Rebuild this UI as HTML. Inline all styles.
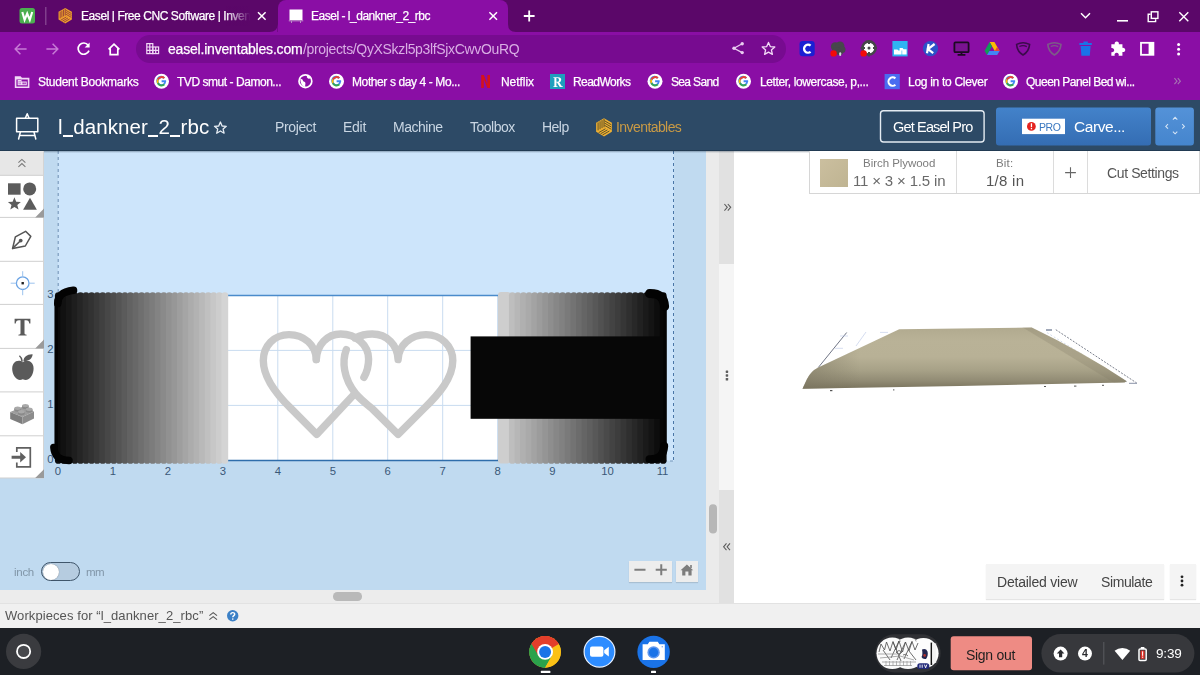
<!DOCTYPE html>
<html>
<head>
<meta charset="utf-8">
<title>Easel - l_dankner_2_rbc</title>
<style>
*{box-sizing:border-box;margin:0;padding:0}
html,body{width:1200px;height:675px;overflow:hidden;background:#fff;font-family:"Liberation Sans",sans-serif;}
.abs{position:absolute}
#root{position:relative;width:1200px;height:675px;overflow:hidden}
.t{position:absolute;white-space:nowrap;line-height:1;will-change:transform}
/* chrome */
#tabbar{left:0;top:0;width:1200px;height:32px;background:#5b0769}
#toolbar{left:0;top:32px;width:1200px;height:68px;background:#8a0ea5}
#acttab{left:277.500px;top:0px;width:230.500px;height:32px;background:#8a0ea5;border-radius:8px 8px 0 0}
#url{left:136px;top:35px;width:650px;height:28px;border-radius:14px;background:#770b90}
.wt{color:#fff;-webkit-text-stroke:0.250px #fff}
.mn{top:119.700px;font-size:14px;color:#c9d6e3}
.bm{top:75.500px;font-size:12px}
/* app */
#apphdr{left:0;top:100px;width:1200px;height:51px;background:#2d4a66}
#canvasbg{left:44px;top:151px;width:662px;height:439px;background:#c0daf0}
#canvasin{left:58px;top:151px;width:615.500px;height:310px;background:#cde5fb}
#ltool{left:0;top:151px;width:44px;height:327px;background:#fff}
#belowtool{left:0;top:478px;width:44px;height:112px;background:#c0daf0}
#vscroll{left:706px;top:151px;width:13px;height:439px;background:#ebebeb}
#divider{left:719px;top:151px;width:15px;height:452px;background:#f5f5f5}
#divtop{left:719px;top:151px;width:15px;height:113px;background:#e1e1e1}
#hscroll{left:0;top:590px;width:719px;height:13px;background:#ececec}
#wpbar{left:0;top:603px;width:1200px;height:25px;background:#f0f0f0}
#shelf{left:0;top:628px;width:1200px;height:47px;background:#1d2025}
</style>
</head>
<body>
<div id="root">
<!-- browser chrome -->
<div class="abs" id="tabbar"></div>
<div class="abs" id="toolbar"></div>
<div class="abs" id="acttab"></div>
<div class="abs" id="url"></div>

<!-- tab strip content -->
<svg class="abs" style="left:0;top:0" width="1200" height="100" viewBox="0 0 1200 100">
  <defs>
    <linearGradient id="fade" x1="0" x2="1"><stop offset="0" stop-color="#5b0769" stop-opacity="0"/><stop offset="1" stop-color="#5b0769"/></linearGradient>
    <g id="gicon">
      <circle r="7.5" fill="#fff"/>
      <path d="M4.6,-0.9 H0.1 V1.1 H2.7 C2.4,2.4 1.3,3.1 0.1,3.1 A3.1,3.1 0 1 1 2.1,-2.4 L3.5,-3.8 A5,5 0 1 0 4.7,0.2 Z" fill="#4285f4"/>
      <path d="M-4.4,-2.3 A5,5 0 0 1 3.5,-3.8 L2.1,-2.4 A3.1,3.1 0 0 0 -2.8,-1.2 Z" fill="#ea4335"/>
      <path d="M-4.4,-2.3 L-2.8,-1.2 A3.1,3.1 0 0 0 -2.8,1.3 L-4.4,2.5 A5,5 0 0 1 -4.4,-2.3 Z" fill="#fbbc05"/>
      <path d="M-4.4,2.5 L-2.8,1.3 A3.1,3.1 0 0 0 2.1,2.6 L3.6,3.8 A5,5 0 0 1 -4.4,2.5 Z" fill="#34a853"/>
    </g>
  </defs>
  <!-- active tab curves -->
  <path d="M269.500,32 Q277.500,32 277.500,24 V32 Z" fill="#8a0ea5"/>
  <path d="M516,32 Q508,32 508,24 V32 Z" fill="#8a0ea5"/>
  <!-- W icon -->
  <rect x="19.5" y="8" width="15.5" height="15.5" rx="2.5" fill="#4caf50"/>
  <path d="M22.3,12 L24.6,19.8 L27.2,13.5 L29.8,19.8 L32.2,12" fill="none" stroke="#fff" stroke-width="2.1" stroke-linejoin="miter"/>
  <rect x="45.2" y="7" width="1.2" height="18" fill="#8a4d96"/>
  <!-- easel cube icon -->
  <g transform="translate(65.2,15.7)"><path d="M0,-7.70 L6.67,-3.85 V3.85 L0,7.70 L-6.67,3.85 V-3.85 Z" fill="#f0a12e"/><path d="M-1.67,-5.94 V0.66 M0.50,-5.48 L6.07,-2.23 M-4.50,4.51 L1.17,1.26 M-3.33,-4.98 V1.62 M0.50,-3.55 L6.07,-0.30 M-2.83,5.48 L2.83,2.23 M-5.00,-4.01 V2.59 M0.50,-1.62 L6.07,1.63 M-1.17,6.44 L4.50,3.19 M0,-6.90 V0 " stroke="#7a2438" stroke-width="0.85" fill="none" opacity="0.8"/></g>
  <rect x="222" y="6" width="30" height="20" fill="url(#fade)"/>
  <!-- close x tab1 -->
  <path d="M258,12.2 L265.6,19.8 M265.6,12.2 L258,19.8" stroke="#fff" stroke-width="1.5"/>
  <!-- active tab icon -->
  <rect x="289.5" y="9.5" width="13" height="10.5" fill="#fff"/>
  <rect x="288.8" y="20.3" width="14.4" height="1" fill="#c9a4d2"/>
  <path d="M291.5,21 V23 M300.5,21 V23" stroke="#b88fc4" stroke-width="1"/>
  <path d="M489.4,12.2 L497,19.8 M497,12.2 L489.4,19.8" stroke="#fff" stroke-width="1.5"/>
  <path d="M529.2,10.6 V21.4 M523.8,16 H534.6" stroke="#fff" stroke-width="1.8"/>
  <!-- window controls -->
  <path d="M1081,13.3 L1085.5,17.8 L1090,13.3" fill="none" stroke="#fff" stroke-width="1.5"/>
  <rect x="1117" y="20" width="11" height="1.6" fill="#fff"/>
  <path d="M1150.6,14.2 H1148.2 V21.6 H1155.6 V19.2" fill="none" stroke="#fff" stroke-width="1.4"/>
  <rect x="1151.3" y="11.8" width="6.6" height="6.6" fill="none" stroke="#fff" stroke-width="1.4"/>
  <path d="M1179.3,12.2 L1188.3,21.2 M1188.3,12.2 L1179.3,21.2" stroke="#fff" stroke-width="1.4"/>
  <!-- nav icons -->
  <path d="M26.6,49 H15.4 M20.4,43.8 L15.2,49 L20.4,54.2" fill="none" stroke="#c77bd6" stroke-width="1.5"/>
  <path d="M46.4,49 H57.6 M52.6,43.8 L57.8,49 L52.6,54.2" fill="none" stroke="#c77bd6" stroke-width="1.5"/>
  <path d="M88.2,45.2 A5.6,5.6 0 1 0 89,50.6" fill="none" stroke="#fff" stroke-width="1.7"/>
  <path d="M89.6,42.6 V47.6 H84.6 Z" fill="#fff"/>
  <path d="M108.6,49.4 L114,44.2 L119.4,49.4 M110.2,48.6 V54.6 H117.8 V48.6" fill="none" stroke="#fff" stroke-width="1.7" stroke-linejoin="miter"/>
  <!-- site info icon -->
  <g fill="none" stroke="#f1d9f6" stroke-width="1.2">
    <rect x="146.8" y="43.6" width="6" height="10"/>
    <rect x="152.8" y="47" width="5.8" height="6.6"/>
    <path d="M146.8,47 H152.8 M146.8,50.3 H158.6 M149.8,43.6 V53.6 M155.7,47 V53.6"/>
  </g>
  <!-- share -->
  <g fill="#e9cdf0" stroke="#e9cdf0">
    <circle cx="742.2" cy="43.8" r="1.7" stroke="none"/><circle cx="742.2" cy="52.6" r="1.7" stroke="none"/><circle cx="734" cy="48.2" r="1.7" stroke="none"/>
    <path d="M742.2,43.8 L734,48.2 L742.2,52.6" fill="none" stroke-width="1.3"/>
  </g>
  <!-- star -->
  <path d="M768.5,42.4 L770.3,46.6 L774.8,47 L771.4,50 L772.4,54.4 L768.5,52.1 L764.6,54.4 L765.6,50 L762.2,47 L766.7,46.6 Z" fill="none" stroke="#f1d9f6" stroke-width="1.3" stroke-linejoin="round"/>
  <!-- ext: C -->
  <rect x="799.5" y="41" width="15.2" height="15.2" rx="3.2" fill="#1b1fd3"/>
  <path d="M810.6,45.6 A4,4 0 1 0 810.6,51.8" fill="none" stroke="#fff" stroke-width="2.3"/>
  <!-- ext: cloud -->
  <g fill="#47474b"><circle cx="835.200" cy="46.600" r="4.300"/><circle cx="840" cy="45.800" r="4.400"/><circle cx="842" cy="49.600" r="3.500"/><circle cx="836.400" cy="50.600" r="3.700"/><circle cx="839.800" cy="52" r="3.200"/><path d="M838.500,53 L840.600,56.600 L842,52 Z"/></g>
  <circle cx="833.600" cy="53.400" r="3.200" fill="#f40a0a"/>
  <rect x="839.200" y="52.200" width="2" height="3.800" rx="1" fill="#d8d8e0"/>
  <!-- ext: target -->
  <circle cx="869" cy="48" r="6.6" fill="#fff" stroke="#46464a" stroke-width="2.6"/>
  <path d="M869,40 V44 M869,52 V56.4 M860.6,48 H865 M873,48 H877" stroke="#46464a" stroke-width="2"/>
  <circle cx="869" cy="48" r="1.5" fill="#46464a"/>
  <circle cx="863.6" cy="53.4" r="3.2" fill="#f40a0a"/>
  <!-- ext: blue folder -->
  <rect x="892.4" y="41" width="15.2" height="15.4" fill="#2fb4f2"/>
  <path d="M894,49.4 h3.4 l1,1.200 h3.200 v4 h-7.600 Z M899.600,48 h3 l1,1.200 h3 v5.400 h-4.400 v-4.200 h-2.600 Z" fill="#fff"/>
  <!-- ext: K -->
  <circle cx="930.5" cy="48.6" r="7.6" fill="#2c52c8"/>
  <path d="M928.6,44 L927,53.2 M934.6,44 L928,49 L933.2,53.2" fill="none" stroke="#fff" stroke-width="2.2"/>
  <!-- ext: monitor -->
  <rect x="954.4" y="42.4" width="14.2" height="9.8" rx="1" fill="#7a1391" stroke="#1c0a22" stroke-width="1.8"/>
  <path d="M957.6,54.800 H965.4 M961.5,52.600 V54.800" stroke="#1c0a22" stroke-width="1.800"/>
  <!-- ext: drive -->
  <path d="M989.600,42 L994.400,42 L999.600,51 L994.800,51 Z" fill="#fbbc04"/>
  <path d="M989.600,42 L992,46.200 L987,55 L984.600,50.800 Z" fill="#0f9d58"/>
  <path d="M989.400,51 L999.600,51 L997.200,55 L987,55 Z" fill="#4285f4"/>
  <path d="M994.800,51 L999.600,51 L997.200,46.800 Z" fill="#ea4335"/>
  <!-- ext: shields -->
  <path d="M1016.600,44.400 Q1023,41 1029.600,44.400 Q1029,51.800 1023,55 Q1017,51.800 1016.600,44.400 Z" fill="none" stroke="#3b0b4b" stroke-width="1.600"/>
  <path d="M1019.400,46.600 Q1023,44.600 1026.800,46.600" fill="none" stroke="#3b0b4b" stroke-width="1.200"/>
  <path d="M1047.800,44.400 Q1054.400,41 1061,44.400 Q1060.400,51.800 1054.400,55 Q1048.400,51.800 1047.800,44.400 Z" fill="none" stroke="#7d5b88" stroke-width="1.600"/>
  <path d="M1050.800,46.600 Q1054.400,44.600 1058.200,46.600" fill="none" stroke="#7d5b88" stroke-width="1.200"/>
  <!-- ext: trash -->
  <path d="M1079.400,43 H1091.800 V45 H1079.400 Z M1083.400,41.600 H1087.800 V43 H1083.400 Z M1080.600,46 H1090.600 L1089.800,55.800 H1081.400 Z" fill="#1a73e8"/>
  <!-- puzzle -->
  <g transform="translate(1117,49) scale(1.130) translate(-1117,-49.600)"><path d="M1112,45.400 h3 a1.900,1.900 0 1 1 3.600,0 h3.200 v3.200 a1.900,1.900 0 1 1 0,3.600 v3.400 h-3.400 a1.900,1.900 0 1 0 -3.400,0 h-3 v-3.200 a1.900,1.900 0 1 0 0,-3.600 Z" fill="#fff"/></g>
  <!-- side panel -->
  <rect x="1141" y="42.800" width="12.400" height="12" fill="none" stroke="#fff" stroke-width="1.800"/>
  <rect x="1148.600" y="42.800" width="4.800" height="12" fill="#fff"/>
  <circle cx="1178.600" cy="44.400" r="1.500" fill="#fff"/><circle cx="1178.600" cy="49.200" r="1.500" fill="#fff"/><circle cx="1178.600" cy="54" r="1.500" fill="#fff"/>
  <!-- bookmarks icons -->
  <path d="M15.600,77 h4.600 l1.400,1.600 h7 v8.600 h-13 Z" fill="none" stroke="#f1d9f6" stroke-width="1.600"/><path d="M15.600,77 h4.600 l1.400,1.600 v0.800 h-6 Z" fill="#f1d9f6"/>
  <path d="M18.200,80.600 h2.800 v4.200 h-2.800 Z M22,82 h4.200 v2.800 h-4.200 Z" fill="none" stroke="#f1d9f6" stroke-width="1.100"/><path d="M19.600,80.600 v4.200 M18.200,82.700 h2.800 M24.100,82 v2.800" stroke="#f1d9f6" stroke-width="0.700"/>
  <use href="#gicon" x="161.500" y="81.200"/>
  <circle cx="305.400" cy="81.200" r="6.400" fill="none" stroke="#fff" stroke-width="1.700"/>
  <path d="M300.200,78.600 q3,0.600 3,2.600 q2.600,0.600 2.200,2.800 q-0.600,1.600 0.200,3.200 q-5,0 -5.400,-8.600 Z M307,75.400 q-0.800,2 1,3.200 q2.200,0.400 2.800,-1.200 q-1.400,-2 -3.800,-2 Z" fill="#fff"/>
  <use href="#gicon" x="336.500" y="81.200"/>
  <path d="M481.200,75 h2.600 l3.600,9 v-9 h2.600 v13 h-2.600 l-3.600,-9 v9 h-2.600 Z" fill="#d4121a"/>
  <rect x="550" y="74" width="15" height="15" fill="#1f9fbd"/>
  <path d="M553.400,77.200 h4.800 q3,0 3,2.600 q0,2 -2,2.500 l2.600,3.900 h1 v0.800 h-3 l-2.800,-4.400 h-0.600 v3.600 h1.200 v0.800 h-4.200 v-0.800 h1 v-8.200 h-1 Z M556.400,78 v3.800 h1 q1.600,0 1.600,-1.900 q0,-1.900 -1.600,-1.900 Z" fill="#fff"/>
  <use href="#gicon" x="655" y="81.200"/>
  <use href="#gicon" x="743.500" y="81.200"/>
  <rect x="884.600" y="74" width="15.200" height="15.200" fill="#4a6cf0"/>
  <path d="M895.400,78.400 A4.200,4.200 0 1 0 895.400,84.800" fill="none" stroke="#fff" stroke-width="2.100"/>
  <use href="#gicon" x="1010.500" y="81.200"/>
  <path d="M1174.400,78.200 L1177,81.200 L1174.400,84.200 M1177.800,78.200 L1180.400,81.200 L1177.800,84.200" fill="none" stroke="#a673b3" stroke-width="1.100"/>
</svg>
<!-- chrome text -->
<div class="t wt" style="left:80.500px;top:9.500px;font-size:12px;width:172px;overflow:hidden;letter-spacing:-0.428px">Easel | Free CNC Software | Inventables</div>
<div class="t wt" style="left:311px;top:9.500px;font-size:12px;letter-spacing:-0.482px">Easel - l_dankner_2_rbc</div>
<div class="t wt" style="left:168px;top:41.500px;font-size:14px;letter-spacing:-0.192px">easel.inventables.com</div>
<div class="t" style="left:302.500px;top:41.500px;font-size:14px;color:#d9aee4;letter-spacing:-0.343px">/projects/QyXSkzl5p3lfSjxCwvOuRQ</div>
<div class="t wt bm" style="left:37.500px;letter-spacing:-0.248px">Student Bookmarks</div>
<div class="t wt bm" style="left:177px;letter-spacing:-0.457px">TVD smut - Damon...</div>
<div class="t wt bm" style="left:352px;letter-spacing:-0.396px">Mother s day 4 - Mo...</div>
<div class="t wt bm" style="left:501px;letter-spacing:-0.049px">Netflix</div>
<div class="t wt bm" style="left:573px;letter-spacing:-0.552px">ReadWorks</div>
<div class="t wt bm" style="left:670.500px;letter-spacing:-0.652px">Sea Sand</div>
<div class="t wt bm" style="left:759.500px;letter-spacing:-0.371px">Letter, lowercase, p,...</div>
<div class="t wt bm" style="left:907.600px;letter-spacing:-0.290px">Log in to Clever</div>
<div class="t wt bm" style="left:1026.400px;letter-spacing:-0.515px">Queen Panel Bed wi...</div>

<!-- app -->
<div class="abs" id="apphdr"></div>
<div class="abs" id="canvasbg"></div>
<div class="abs" id="canvasin"></div>

<!-- canvas -->
<svg class="abs" style="left:44px;top:151px" width="662" height="439" viewBox="44 151 662 439">
  <defs>
    <linearGradient id="gl" x1="0" x2="1"><stop offset="0" stop-color="#050505"/><stop offset="0.050" stop-color="#161616"/><stop offset="1" stop-color="#d4d4d4"/></linearGradient>
    <linearGradient id="gr" x1="0" x2="1"><stop offset="0" stop-color="#d2d2d2"/><stop offset="0.070" stop-color="#c6c6c6"/><stop offset="0.072" stop-color="#bcbcbc"/><stop offset="0.920" stop-color="#141414"/><stop offset="1" stop-color="#050505"/></linearGradient>
  </defs>
  <!-- dashed bounds -->
  <path d="M58.200,151 V292" stroke="#6d8fb3" stroke-width="1" stroke-dasharray="3 3"/>
  <path d="M673.500,151 V461" stroke="#4a76a6" stroke-width="1" stroke-dasharray="3 3"/>
  <path d="M664,461 H673.500" stroke="#6d8fb3" stroke-width="0.900" stroke-dasharray="3 3"/>
  <!-- workpiece -->
  <rect x="58.0" y="295.4" width="604.5" height="164.9" fill="#fff"/>
  <path d="M113.0,295.4 V460.3" stroke="#c9dcf0" stroke-width="1"/>
<path d="M167.9,295.4 V460.3" stroke="#c9dcf0" stroke-width="1"/>
<path d="M222.9,295.4 V460.3" stroke="#c9dcf0" stroke-width="1"/>
<path d="M277.8,295.4 V460.3" stroke="#c9dcf0" stroke-width="1"/>
<path d="M332.8,295.4 V460.3" stroke="#c9dcf0" stroke-width="1"/>
<path d="M387.7,295.4 V460.3" stroke="#c9dcf0" stroke-width="1"/>
<path d="M442.7,295.4 V460.3" stroke="#c9dcf0" stroke-width="1"/>
<path d="M497.6,295.4 V460.3" stroke="#c9dcf0" stroke-width="1"/>
<path d="M552.5,295.4 V460.3" stroke="#c9dcf0" stroke-width="1"/>
<path d="M607.5,295.4 V460.3" stroke="#c9dcf0" stroke-width="1"/>
<path d="M58.0,405.4 H662.5" stroke="#c9dcf0" stroke-width="1"/>
<path d="M58.0,350.4 H662.5" stroke="#c9dcf0" stroke-width="1"/>

  <path d="M58.0,295.4 H662.5" stroke="#4a8bcb" stroke-width="1.500"/>
  <path d="M58.0,460.6 H662.5" stroke="#2f6dab" stroke-width="1.500"/>
  <!-- hearts -->
  <g fill="none" stroke="#c9c9c9" stroke-width="7.400" stroke-linecap="round" stroke-linejoin="round">
    <path d="M316.300,359.600 C316,345 304,334.600 289,334.600 C274,334.600 263.300,346 263.300,360.500 C263.300,378 276,394 291,408.500 L316.700,434.400 L353.500,395"/>
    <path d="M316.300,359.600 C317,345 327,334 340.700,334 C356,334 368.600,345 368.600,359 C368.600,366 367,372 363.900,377.400"/>
    <path d="M346.300,349.600 C342,361 343,378 356,394 C362,401 368,405 372,408.500 L398.100,434.400 L424,408.500 C439,394 452.800,378 452.800,360.500 C452.800,346 441,334.600 426,334.600 C411,334.600 398.400,345 398.100,359.600 C397.600,345 387,334 372.200,334 C366,334 360,335.500 355,338"/>
  </g>
  <!-- left gradient block -->
  <rect x="55" y="296" width="172.600" height="164" fill="url(#gl)"/>
<g stroke-linecap="round" fill="none">
<path d="M58.3,295.6 V460.4" stroke="#0a0a0a" stroke-width="6.8"/>
<path d="M63.8,295.6 V460.4" stroke="#111111" stroke-width="6.8"/>
<path d="M69.4,295.6 V460.4" stroke="#171717" stroke-width="6.8"/>
<path d="M74.9,295.6 V460.4" stroke="#1e1e1e" stroke-width="6.8"/>
<path d="M80.5,295.6 V460.4" stroke="#252525" stroke-width="6.8"/>
<path d="M86.0,295.6 V460.4" stroke="#2c2c2c" stroke-width="6.8"/>
<path d="M91.6,295.6 V460.4" stroke="#323232" stroke-width="6.8"/>
<path d="M97.1,295.6 V460.4" stroke="#393939" stroke-width="6.8"/>
<path d="M102.7,295.6 V460.4" stroke="#404040" stroke-width="6.8"/>
<path d="M108.2,295.6 V460.4" stroke="#474747" stroke-width="6.8"/>
<path d="M113.8,295.6 V460.4" stroke="#4d4d4d" stroke-width="6.8"/>
<path d="M119.3,295.6 V460.4" stroke="#545454" stroke-width="6.8"/>
<path d="M124.9,295.6 V460.4" stroke="#5b5b5b" stroke-width="6.8"/>
<path d="M130.4,295.6 V460.4" stroke="#626262" stroke-width="6.8"/>
<path d="M136.0,295.6 V460.4" stroke="#686868" stroke-width="6.8"/>
<path d="M141.6,295.6 V460.4" stroke="#6f6f6f" stroke-width="6.8"/>
<path d="M147.1,295.6 V460.4" stroke="#767676" stroke-width="6.8"/>
<path d="M152.7,295.6 V460.4" stroke="#7c7c7c" stroke-width="6.8"/>
<path d="M158.2,295.6 V460.4" stroke="#838383" stroke-width="6.8"/>
<path d="M163.8,295.6 V460.4" stroke="#8a8a8a" stroke-width="6.8"/>
<path d="M169.3,295.6 V460.4" stroke="#919191" stroke-width="6.8"/>
<path d="M174.9,295.6 V460.4" stroke="#979797" stroke-width="6.8"/>
<path d="M180.4,295.6 V460.4" stroke="#9e9e9e" stroke-width="6.8"/>
<path d="M186.0,295.6 V460.4" stroke="#a5a5a5" stroke-width="6.8"/>
<path d="M191.5,295.6 V460.4" stroke="#acacac" stroke-width="6.8"/>
<path d="M197.1,295.6 V460.4" stroke="#b2b2b2" stroke-width="6.8"/>
<path d="M202.6,295.6 V460.4" stroke="#b9b9b9" stroke-width="6.8"/>
<path d="M208.2,295.6 V460.4" stroke="#c0c0c0" stroke-width="6.8"/>
<path d="M213.7,295.6 V460.4" stroke="#c7c7c7" stroke-width="6.8"/>
<path d="M219.3,295.6 V460.4" stroke="#cdcdcd" stroke-width="6.8"/>
<path d="M224.8,295.6 V460.4" stroke="#d4d4d4" stroke-width="6.8"/>
</g>
  <!-- right gradient block -->
  <rect x="498" y="296" width="168" height="164" fill="url(#gr)"/>
<g stroke-linecap="round" fill="none">
<rect x="498" y="292" width="12.500" height="171.400" rx="3" fill="#cecece" stroke="none"/>
<path d="M512.3,295.6 V460.4" stroke="#bebebe" stroke-width="6.8"/>
<path d="M517.9,295.6 V460.4" stroke="#b7b7b7" stroke-width="6.8"/>
<path d="M523.5,295.6 V460.4" stroke="#b0b0b0" stroke-width="6.8"/>
<path d="M529.1,295.6 V460.4" stroke="#aaaaaa" stroke-width="6.8"/>
<path d="M534.7,295.6 V460.4" stroke="#a3a3a3" stroke-width="6.8"/>
<path d="M540.2,295.6 V460.4" stroke="#9c9c9c" stroke-width="6.8"/>
<path d="M545.8,295.6 V460.4" stroke="#959595" stroke-width="6.8"/>
<path d="M551.4,295.6 V460.4" stroke="#8e8e8e" stroke-width="6.8"/>
<path d="M557.0,295.6 V460.4" stroke="#878787" stroke-width="6.8"/>
<path d="M562.6,295.6 V460.4" stroke="#818181" stroke-width="6.8"/>
<path d="M568.2,295.6 V460.4" stroke="#7a7a7a" stroke-width="6.8"/>
<path d="M573.8,295.6 V460.4" stroke="#737373" stroke-width="6.8"/>
<path d="M579.4,295.6 V460.4" stroke="#6c6c6c" stroke-width="6.8"/>
<path d="M585.0,295.6 V460.4" stroke="#656565" stroke-width="6.8"/>
<path d="M590.5,295.6 V460.4" stroke="#5f5f5f" stroke-width="6.8"/>
<path d="M596.1,295.6 V460.4" stroke="#585858" stroke-width="6.8"/>
<path d="M601.7,295.6 V460.4" stroke="#515151" stroke-width="6.8"/>
<path d="M607.3,295.6 V460.4" stroke="#4a4a4a" stroke-width="6.8"/>
<path d="M612.9,295.6 V460.4" stroke="#434343" stroke-width="6.8"/>
<path d="M618.5,295.6 V460.4" stroke="#3d3d3d" stroke-width="6.8"/>
<path d="M624.1,295.6 V460.4" stroke="#363636" stroke-width="6.8"/>
<path d="M629.7,295.6 V460.4" stroke="#2f2f2f" stroke-width="6.8"/>
<path d="M635.3,295.6 V460.4" stroke="#282828" stroke-width="6.8"/>
<path d="M640.8,295.6 V460.4" stroke="#212121" stroke-width="6.8"/>
<path d="M646.4,295.6 V460.4" stroke="#1a1a1a" stroke-width="6.8"/>
<path d="M652.0,295.6 V460.4" stroke="#141414" stroke-width="6.8"/>
<path d="M657.6,295.6 V460.4" stroke="#0d0d0d" stroke-width="6.8"/>
<path d="M663.2,295.6 V460.4" stroke="#060606" stroke-width="6.8"/>
</g>
  <!-- black rect -->
  <rect x="470.600" y="336.400" width="195" height="82.400" fill="#070707"/>
  <!-- corner blobs -->
  <g fill="none" stroke="#030303" stroke-linecap="round" stroke-linejoin="round">
    <path d="M57.800,303.500 C58,296 61.500,292 73.500,290.300" stroke-width="7.600"/>
    <path d="M56.200,300 V448" stroke-width="3.400"/>
    <path d="M53.800,447.500 C54.500,455.500 58,459.600 69,460.500" stroke-width="7.400"/>
    <path d="M649.500,293.600 C659,293.400 664,297 664.600,306.500" stroke-width="9"/>
    <path d="M665,300 V450" stroke-width="3"/>
    <path d="M649.500,459.200 C659,459.600 663.600,455 664.200,446" stroke-width="8"/>
  </g>
  <g font-family="Liberation Sans, sans-serif" font-size="11.300px" fill="#3a5878"><text x="58.0" y="474.600" text-anchor="middle">0</text><text x="113.0" y="474.600" text-anchor="middle">1</text><text x="167.9" y="474.600" text-anchor="middle">2</text><text x="222.9" y="474.600" text-anchor="middle">3</text><text x="277.8" y="474.600" text-anchor="middle">4</text><text x="332.8" y="474.600" text-anchor="middle">5</text><text x="387.7" y="474.600" text-anchor="middle">6</text><text x="442.7" y="474.600" text-anchor="middle">7</text><text x="497.6" y="474.600" text-anchor="middle">8</text><text x="552.5" y="474.600" text-anchor="middle">9</text><text x="607.5" y="474.600" text-anchor="middle">10</text><text x="662.5" y="474.600" text-anchor="middle">11</text><text x="50.300" y="463.3" text-anchor="middle">0</text><text x="50.300" y="408.4" text-anchor="middle">1</text><text x="50.300" y="353.4" text-anchor="middle">2</text><text x="50.300" y="298.4" text-anchor="middle">3</text></g>
</svg>
<div class="abs" id="ltool"></div>
<div class="abs" id="belowtool"></div>
<div class="abs" id="vscroll"></div>
<div class="abs" id="divider"></div>
<div class="abs" id="divtop"></div>
<div class="abs" id="hscroll"></div>
<div class="abs" id="wpbar"></div>
<div class="abs" id="shelf"></div>

<!-- fade for tab1 title -->
<div class="abs" style="left:226px;top:6px;width:27px;height:20px;background:linear-gradient(90deg,rgba(91,7,105,0),#5b0769 90%)"></div>
<!-- app header content -->
<div class="abs" style="left:0;top:150px;width:1200px;height:3px;background:linear-gradient(180deg,rgba(20,40,60,.55),rgba(20,40,60,0))"></div>
<svg class="abs" style="left:0;top:100px" width="1200" height="51" viewBox="0 100 1200 51">
  <!-- easel logo -->
  <g fill="none" stroke="#fff" stroke-width="1.5" stroke-linejoin="round" stroke-linecap="round">
    <rect x="16.600" y="118.200" width="21.200" height="13.600"/>
    <path d="M25.400,118 L27.200,113.800 L29,118"/>
    <path d="M20.400,132 L18.600,139 M34,132 L35.800,139 M19.400,135.600 H35"/>
  </g>
  <!-- star -->
  <path d="M220.400,122 L222.100,126 L226.300,126.300 L223.100,129.100 L224.100,133.200 L220.400,131 L216.700,133.200 L217.700,129.100 L214.500,126.300 L218.700,126 Z" fill="none" stroke="#e6edf4" stroke-width="1.300" stroke-linejoin="round"/>
  <!-- inventables icon -->
  <g transform="translate(604,127.3)"><path d="M0,-9.10 L7.88,-4.55 V4.55 L0,9.10 L-7.88,4.55 V-4.55 Z" fill="#eeb033"/><path d="M-1.97,-7.16 V0.84 M0.50,-6.52 L7.28,-2.57 M-5.41,5.39 L1.47,1.44 M-3.94,-6.02 V1.97 M0.50,-4.25 L7.28,-0.30 M-3.44,6.52 L3.44,2.57 M-5.91,-4.89 V3.11 M0.50,-1.98 L7.28,1.97 M-1.47,7.66 L5.41,3.71 M0,-8.30 V0 " stroke="#3d3a22" stroke-width="0.95" fill="none" opacity="0.85"/></g>
  <!-- get easel pro -->
  <rect x="880.500" y="110.800" width="103.600" height="31.200" rx="3" fill="none" stroke="#e4ebf2" stroke-width="1.400"/>
  <!-- carve -->
  <defs>
    <linearGradient id="cv" x1="0" y1="0" x2="0" y2="1"><stop offset="0" stop-color="#4382ca"/><stop offset="1" stop-color="#346db3"/></linearGradient>
    <linearGradient id="cv2" x1="0" y1="0" x2="0" y2="1"><stop offset="0" stop-color="#5492d8"/><stop offset="1" stop-color="#4585cd"/></linearGradient>
  </defs>
  <rect x="996" y="107.400" width="155" height="38.200" rx="3" fill="url(#cv)"/>
  <rect x="1155.300" y="107.400" width="38.600" height="38.200" rx="3" fill="url(#cv2)"/>
  <rect x="1022" y="118.700" width="43" height="15.400" fill="#fff"/>
  <circle cx="1031.400" cy="126.400" r="4.400" fill="#e5231f"/>
  <rect x="1030.800" y="123.300" width="1.300" height="3.800" fill="#fff"/><rect x="1030.800" y="127.900" width="1.300" height="1.400" fill="#fff"/>
  <g fill="none" stroke="#d3e3f5" stroke-width="1.100">
    <path d="M1172.900,119.600 L1175.100,117.400 L1177.300,119.600"/>
    <path d="M1172.900,131.600 L1175.100,133.800 L1177.300,131.600"/>
    <path d="M1168,124.200 L1165.800,126.400 L1168,128.600"/>
    <path d="M1182.200,124.200 L1184.400,126.400 L1182.200,128.600"/>
  </g>
</svg>
<div class="t" style="left:57.700px;top:117.300px;font-size:20.500px;color:#fff;letter-spacing:0.080px">l<span style="display:inline-block;width:10px;height:1.500px;background:#fff;vertical-align:-2.600px;margin:0 0.300px"></span>dankner<span style="display:inline-block;width:10px;height:1.500px;background:#fff;vertical-align:-2.600px;margin:0 0.300px"></span>2<span style="display:inline-block;width:10px;height:1.500px;background:#fff;vertical-align:-2.600px;margin:0 0.300px"></span>rbc</div>
<div class="t mn" style="left:274.700px;letter-spacing:-0.368px">Project</div>
<div class="t mn" style="left:343.200px;letter-spacing:-0.256px">Edit</div>
<div class="t mn" style="left:393.100px;letter-spacing:-0.489px">Machine</div>
<div class="t mn" style="left:470.100px;letter-spacing:-0.495px">Toolbox</div>
<div class="t mn" style="left:542.400px;letter-spacing:-0.524px">Help</div>
<div class="t mn" style="left:616.300px;color:#c99a45;letter-spacing:-0.574px">Inventables</div>
<div class="t" style="left:892.600px;top:119.600px;font-size:14.500px;color:#fff;letter-spacing:-0.836px">Get Easel Pro</div>
<div class="t" style="left:1039px;top:121.800px;font-size:10.500px;color:#3a78c0;letter-spacing:-0.389px">PRO</div>
<div class="t" style="left:1074px;top:119.200px;font-size:15.500px;color:#fff;letter-spacing:-0.408px">Carve...</div>
<!-- material bar -->
<div class="abs" style="left:809px;top:151px;width:390.500px;height:43px;background:#fff;border:1px solid #d6d6d6;border-top:none"></div>
<div class="abs" style="left:956px;top:151px;width:1px;height:42px;background:#dcdcdc"></div>
<div class="abs" style="left:1053px;top:151px;width:1px;height:42px;background:#dcdcdc"></div>
<div class="abs" style="left:1086.500px;top:151px;width:1px;height:42px;background:#dcdcdc"></div>
<div class="abs" style="left:820px;top:158.700px;width:28.300px;height:28.300px;background:linear-gradient(135deg,#cbbf9f,#bfb492)"></div>
<div class="t" style="left:862.700px;top:157.500px;font-size:11.500px;color:#7c7c7c;letter-spacing:-0.044px">Birch Plywood</div>
<div class="t" style="left:853.300px;top:173px;font-size:15px;color:#6a6a6a;letter-spacing:-0.161px">11 × 3 × 1.5 in</div>
<div class="t" style="left:996px;top:157.500px;font-size:11.500px;color:#7c7c7c;letter-spacing:0.169px">Bit:</div>
<div class="t" style="left:985.700px;top:173px;font-size:15px;color:#555;letter-spacing:0.266px">1/8 in</div>
<svg class="abs" style="left:1064px;top:166px" width="14" height="14" viewBox="1064 166 14 14"><path d="M1070.500,167.300 V178 M1065.100,172.600 H1075.900" stroke="#666" stroke-width="1.100"/></svg>
<div class="t" style="left:1107.300px;top:166.300px;font-size:14px;color:#555;letter-spacing:-0.380px">Cut Settings</div>

<!-- left toolbar content -->
<svg class="abs" style="left:0;top:151px" width="44" height="328" viewBox="0 151 44 328">
  <rect x="0" y="151" width="44" height="24.300" fill="#e7e7e7"/>
  <g stroke="#cfcfcf" stroke-width="1">
    <path d="M0,175.300 H44 M0,217.400 H44 M0,261.300 H44 M0,304.400 H44 M0,348.400 H44 M0,391.900 H44 M0,435.800 H44 M0,478 H44"/>
  </g>
  <path d="M43.500,151 V478" stroke="#d4d4d4" stroke-width="1"/>
  <!-- collapse chevrons -->
  <path d="M18.400,162.600 L21.900,159.400 L25.400,162.600 M18.400,166.800 L21.900,163.600 L25.400,166.800" fill="none" stroke="#7a7a7a" stroke-width="1.100"/>
  <!-- shapes -->
  <g fill="#5c5c5c">
    <rect x="8" y="183.300" width="12.600" height="11.400"/>
    <circle cx="29.700" cy="188.900" r="6.500"/>
    <path d="M14.400,197.300 L16.200,201.700 L20.900,202 L17.300,205 L18.500,209.600 L14.400,207.100 L10.300,209.600 L11.500,205 L7.900,202 L12.600,201.700 Z"/>
    <path d="M30,197.800 L36.900,209.700 H23.100 Z"/>
  </g>
  <path d="M44,208.600 V217.400 H35.200 Z" fill="#9a9a9a"/>
  <!-- pen -->
  <g fill="none" stroke="#555" stroke-width="1.500" stroke-linejoin="round" stroke-linecap="round">
    <path d="M12.600,248.400 L15.400,236.800 L25.600,231.300 L30.800,236.400 L25.300,246 Z"/>
    <path d="M12.600,248.400 L20.200,241"/>
  </g>
  <circle cx="20.700" cy="240.600" r="1.900" fill="#555"/>
  <!-- crosshair -->
  <g fill="none" stroke="#6aa3e4" stroke-width="1">
    <circle cx="22.700" cy="283.200" r="6.300" stroke-width="1.300"/>
    <path d="M22.700,271.200 V276.900 M22.700,289.500 V295.200 M10.700,283.200 H16.400 M29,283.200 H34.700" stroke="#9cc3ee"/>
  </g>
  <rect x="21.500" y="282" width="2.400" height="2.400" fill="#222"/>
  <!-- T -->
  <path d="M14.600,318.800 H30.400 V323.600 H29.300 C29,321.300 28.200,320.300 26,320.300 H24.500 V333 C24.500,334.300 25,334.600 26.600,334.700 V335.600 H18.400 V334.700 C20,334.600 20.500,334.300 20.500,333 V320.300 H19 C16.800,320.300 16,321.300 15.700,323.600 H14.600 Z" fill="#5a5a5a"/>
  <path d="M44,339.600 V348.400 H35.200 Z" fill="#9a9a9a"/>
  <!-- apple -->
  <g fill="#5a5a5a">
    <path d="M22.800,362.200 C20.500,360.200 16,360.200 13.600,363.400 C11.200,366.800 12,373.600 15.400,377.600 C17.400,380 20,380.600 22.800,379.200 C25.600,380.600 28.400,380 30.400,377.600 C33.800,373.600 34.600,366.800 32.200,363.400 C29.800,360.200 25.200,360.200 22.800,362.200 Z"/>
    <path d="M23.400,361 C23.600,357 27,354 32.600,354.200 C32.400,358.600 28.800,361.400 23.400,361 Z"/>
    <path d="M22.200,361.600 C22,359 21,357 19.400,355.800" fill="none" stroke="#5a5a5a" stroke-width="1.400"/>
  </g>
  <!-- lego -->
  <g>
    <path d="M10.200,412 L22,407 L34,411.400 L22.400,417 Z" fill="#9d9d9d"/>
    <path d="M10.200,412 L22.400,417 V424.200 L10.200,419 Z" fill="#7d7d7d"/>
    <path d="M22.400,417 L34,411.400 V418.600 L22.400,424.200 Z" fill="#8c8c8c"/>
    <ellipse cx="17.600" cy="410" rx="3.300" ry="1.700" fill="#8a8a8a"/><rect x="14.300" y="408.200" width="6.600" height="1.800" fill="#8a8a8a"/><ellipse cx="17.600" cy="408.200" rx="3.300" ry="1.700" fill="#a9a9a9"/>
    <ellipse cx="25.400" cy="407.400" rx="3.300" ry="1.700" fill="#8a8a8a"/><rect x="22.100" y="405.600" width="6.600" height="1.800" fill="#8a8a8a"/><ellipse cx="25.400" cy="405.600" rx="3.300" ry="1.700" fill="#a9a9a9"/>
    <ellipse cx="21.400" cy="413.600" rx="3.300" ry="1.700" fill="#8a8a8a"/><rect x="18.100" y="411.800" width="6.600" height="1.800" fill="#8a8a8a"/><ellipse cx="21.400" cy="411.800" rx="3.300" ry="1.700" fill="#a9a9a9"/>
    <ellipse cx="29.200" cy="411" rx="3.300" ry="1.700" fill="#8a8a8a"/><rect x="25.900" y="409.200" width="6.600" height="1.800" fill="#8a8a8a"/><ellipse cx="29.200" cy="409.200" rx="3.300" ry="1.700" fill="#a9a9a9"/>
  </g>
  <!-- import -->
  <g fill="none" stroke="#606060" stroke-width="1.700">
    <path d="M16.800,452 V447.800 H30.300 V466.900 H16.800 V462.600"/>
  </g>
  <path d="M11.600,455.800 H20.200 V452 L26,457.300 L20.200,462.600 V458.800 H11.600 Z" fill="#606060"/>
  <path d="M44,469.200 V478 H35.200 Z" fill="#9a9a9a"/>
</svg>
<!-- divider sections -->
<div class="abs" style="left:719px;top:490px;width:15px;height:113.500px;background:#e1e1e1"></div>
<svg class="abs" style="left:700px;top:151px" width="40" height="453" viewBox="700 151 40 453">
  <path d="M724.400,204 L727.300,207.300 L724.400,210.600 M727.800,204 L730.700,207.300 L727.800,210.600" fill="none" stroke="#5a5a5a" stroke-width="1.050"/>
  <path d="M726.500,543.400 L723.600,546.800 L726.500,550.200 M730,543.400 L727.100,546.800 L730,550.200" fill="none" stroke="#5a5a5a" stroke-width="1.050"/>
  <g fill="#5e5e5e"><rect x="725.700" y="370.400" width="2.500" height="2.500" rx="0.600"/><rect x="725.700" y="374.200" width="2.500" height="2.500" rx="0.600"/><rect x="725.700" y="378" width="2.500" height="2.500" rx="0.600"/></g>
  <rect x="709" y="504.200" width="8" height="29.200" rx="4" fill="#b7b7b7"/>
</svg>
<!-- hscroll thumb -->
<div class="abs" style="left:333px;top:592.300px;width:29px;height:8.600px;border-radius:4.300px;background:#b9b9b9"></div>
<div class="abs" style="left:0;top:603px;width:1200px;height:1px;background:#e2e2e2"></div>
<!-- zoom buttons -->
<div class="abs" style="left:629px;top:560.600px;width:43.300px;height:21.800px;background:#ededed;box-shadow:0 1px 1px rgba(0,0,0,.12)"></div>
<div class="abs" style="left:675.800px;top:560.600px;width:22.100px;height:21.800px;background:#ededed;box-shadow:0 1px 1px rgba(0,0,0,.12)"></div>
<svg class="abs" style="left:629px;top:560px" width="70" height="23" viewBox="629 560 70 23">
  <path d="M634.400,569.700 H645.500 M655.700,569.700 H666.800 M661.250,564.200 V575.200" stroke="#7d7d7d" stroke-width="2"/>
  <path d="M686.900,564.400 L693.200,570.200 H691.600 V575.400 H688.400 V571.600 H685.400 V575.400 H682.200 V570.200 H680.600 Z" fill="#7d7d7d"/>
  <rect x="690.200" y="565" width="1.600" height="3" fill="#7d7d7d"/>
</svg>
<!-- inch/mm toggle -->
<div class="t" style="left:14.200px;top:567.200px;font-size:11.500px;color:#8196a8;letter-spacing:-0.277px">inch</div>
<div class="abs" style="left:41.200px;top:562.400px;width:39px;height:19px;border-radius:9.500px;background:#b6cce0;border:1.400px solid #40566b"></div>
<div class="abs" style="left:42.600px;top:563.700px;width:16.400px;height:16.400px;border-radius:50%;background:#fff;box-shadow:0 0 1px rgba(0,0,0,.5)"></div>
<div class="t" style="left:86.200px;top:567.200px;font-size:11.500px;color:#8196a8;letter-spacing:-0.586px">mm</div>
<!-- workpieces bar -->
<div class="t" style="left:5.400px;top:609px;font-size:13px;color:#555;letter-spacing:0.085px">Workpieces for “l_dankner_2_rbc”</div>
<svg class="abs" style="left:205px;top:606px" width="40" height="20" viewBox="205 606 40 20">
  <path d="M209.400,615.600 L213.200,612.600 L217,615.600 M209.400,619.600 L213.200,616.600 L217,619.600" fill="none" stroke="#555" stroke-width="1.100"/>
  <circle cx="232.700" cy="615.800" r="5.700" fill="#3b80c6"/>
  <path d="M230.800,614.400 C230.800,612 234.700,612 234.700,614.300 C234.700,615.600 232.800,615.700 232.800,617.200" fill="none" stroke="#fff" stroke-width="1.400"/>
  <circle cx="232.800" cy="619.100" r="0.800" fill="#fff"/>
</svg>
<!-- right bottom buttons -->
<div class="abs" style="left:985.600px;top:564px;width:178.400px;height:35px;background:#f4f4f4;box-shadow:0 1px 1px rgba(0,0,0,.1)"></div>
<div class="abs" style="left:1169.600px;top:564px;width:26.400px;height:35px;background:#f4f4f4;box-shadow:0 1px 1px rgba(0,0,0,.1)"></div>
<div class="t" style="left:997px;top:574.500px;font-size:14px;color:#444;letter-spacing:-0.220px">Detailed view</div>
<div class="t" style="left:1101px;top:574.500px;font-size:14px;color:#444;letter-spacing:-0.384px">Simulate</div>
<svg class="abs" style="left:1178px;top:574px" width="8" height="14" viewBox="1178 574 8 14"><g fill="#222"><circle cx="1182" cy="576.800" r="1.400"/><circle cx="1182" cy="581" r="1.400"/><circle cx="1182" cy="585.200" r="1.400"/></g></svg>

<!-- 3D preview -->
<svg class="abs" style="left:780px;top:310px" width="380" height="100" viewBox="780 310 380 100">
  <defs>
    <linearGradient id="wood" x1="0" y1="0" x2="0" y2="1">
      <stop offset="0" stop-color="#b1aa8f"/><stop offset="0.220" stop-color="#b9b297"/><stop offset="0.480" stop-color="#b8b196"/><stop offset="0.700" stop-color="#a7a187"/><stop offset="0.870" stop-color="#918b74"/><stop offset="1" stop-color="#79735d"/>
    </linearGradient>
    <linearGradient id="wl" x1="0" y1="0" x2="1" y2="0"><stop offset="0" stop-color="#7d7762" stop-opacity=".6"/><stop offset="1" stop-color="#7d7762" stop-opacity="0"/></linearGradient>
    <linearGradient id="wr" x1="1" y1="0" x2="0" y2="0"><stop offset="0" stop-color="#7d7762" stop-opacity=".7"/><stop offset="1" stop-color="#7d7762" stop-opacity="0"/></linearGradient>
    <clipPath id="wc"><path d="M802.500,388.800 L807,379 Q811,371 818.300,367.500 L899.200,329.200 L1031.700,327.500 Q1083,352 1126.800,381.200 L1124.500,382.600 L960,386 Z"/></clipPath>
  </defs>
  <!-- faint axes -->
  <path d="M818.300,367.500 L846.700,332.500" stroke="#4b5266" stroke-width="0.800"/>
  <path d="M835,348.300 H843 M840,336 H848 M856,346 L866,332 M880,332.400 H888" stroke="#b9c6e6" stroke-width="0.600"/>
  <path d="M1046,330 H1052" stroke="#8a93a8" stroke-width="1.600"/>
  <path d="M1055.800,329.700 L1136.700,383" stroke="#59606f" stroke-width="0.800" stroke-dasharray="2 1.400"/>
  <path d="M1047,332.600 L1128,382.600" stroke="#c9d3e6" stroke-width="0.800" stroke-dasharray="2 2"/>
  <path d="M1129,383.300 H1137" stroke="#8a93a8" stroke-width="1"/>
  <path d="M802.500,388.800 L807,379 Q811,371 818.300,367.500 L899.200,329.200 L1031.700,327.500 Q1083,352 1126.800,381.200 L1124.500,382.600 L960,386 Z" fill="url(#wood)"/>
  <g clip-path="url(#wc)">
    <rect x="800" y="325" width="60" height="66" fill="url(#wl)"/>
    <path d="M1031.700,326 L1130,381.200 L1116,384 L1022,327 Z" fill="#857f68" opacity=".28"/>
    
  </g>
  <g fill="#555"><rect x="830" y="390" width="2.400" height="1.200"/><rect x="893" y="389.400" width="1.400" height="1"/><rect x="1044" y="386" width="2" height="1"/><rect x="1074" y="385.600" width="2.400" height="1"/><rect x="1102" y="384.800" width="2" height="1"/></g>
</svg>
<!-- shelf -->
<svg class="abs" style="left:0;top:628px" width="1200" height="47" viewBox="0 628 1200 47">
  <circle cx="23.600" cy="651.400" r="17.600" fill="#3a3b3f"/>
  <circle cx="23.600" cy="651.400" r="6.600" fill="#48494d" stroke="#fff" stroke-width="1.800"/>
  <!-- chrome -->
  <g transform="translate(545.100,651.900)">
    <circle r="15.800" fill="#fbc116"/>
    <path d="M0,0 L-13.683,-7.900 A15.800,15.800 0 0 1 13.683,-7.900 Z" fill="#e33e2b"/>
    <path d="M-13.683,-7.900 A15.800,15.800 0 0 0 0,15.800 L6.900,3.900 L0,0 Z" fill="#2ba24c"/>
    <path d="M0,-7.900 H13.683 A15.800,15.800 0 0 0 -13.683,-7.900 L-6.800,3.950 Z" fill="#e33e2b"/>
    <path d="M-13.683,-7.900 L-6.840,3.950 L0,15.800 A15.800,15.800 0 0 1 -13.683,-7.900 Z" fill="#2ba24c"/>
    <path d="M0,15.800 L6.840,3.950 L13.683,-7.900 A15.800,15.800 0 0 1 0,15.800 Z" fill="#fbc116"/>
    <circle r="7.900" fill="#fff"/>
    <circle r="6" fill="#1a73e8"/>
  </g>
  <rect x="540.800" y="670.800" width="9.600" height="2.200" rx="0.600" fill="#fff"/>
  <!-- zoom -->
  <circle cx="599.500" cy="651.700" r="15.400" fill="#2d8cff" stroke="#e8f1ff" stroke-width="1.200"/>
  <rect x="590" y="646.400" width="13.400" height="10.400" rx="2" fill="#fff"/>
  <path d="M604.200,650.200 L608.800,646.800 V656.400 L604.200,653 Z" fill="#fff"/>
  <!-- camera -->
  <circle cx="653.600" cy="651.900" r="16.200" fill="#1a73e8"/>
  <path d="M649.400,641.800 H657.800 L659.400,644.200 H664.800 V660 H642.600 V644.200 H647.800 Z" fill="#fff"/>
  <circle cx="653.600" cy="652.400" r="6.200" fill="#5e97f0"/>
  <circle cx="653.600" cy="652.400" r="4.600" fill="#1a73e8"/>
  <rect x="661.600" y="646" width="1.400" height="1.400" fill="#8ab4f8"/>
  <rect x="651" y="670.800" width="5" height="2.200" rx="0.600" fill="#fff"/>
  <!-- thumbnails pill -->
  <rect x="875.300" y="634.200" width="65.400" height="38.200" rx="19.100" fill="#303135"/>
  <circle cx="892.300" cy="653.300" r="15.800" fill="#fbfbfb"/>
  <circle cx="908" cy="653.300" r="15.800" fill="#fafafa"/>
  <circle cx="923.400" cy="653.300" r="15.200" fill="#fdfdfd"/>
  <path d="M898.800,638.500 L900.400,641.500 M914.800,638.500 L916.200,641.500" stroke="#777" stroke-width="0.700"/>
  <g fill="none" stroke="#4a4a4a" stroke-width="0.800" stroke-linejoin="round">
    <path d="M879,652 L881,644 L884.500,650 L886.500,642 L890,651 L893,641.500 L896,650 L899,641 L902.500,652 L905.500,642 L909,651 L912,641.500 L915,650 L918,643"/>
    <path d="M883,650 L890,660 M893,642 L901,661 M899,641 L891,658 M905.500,642 L897,660 M912,641.500 L904,659 M909,651 L916,660"/>
    <path d="M878,654 H897 M880,658 L900,656 L914,660 M882,662 H916 M884,665.500 H912" stroke="#8a8a8a" stroke-width="0.700"/>
    <path d="M886,661 v5 M889.500,661 v5 M893,661 v5 M896.500,661 v5 M900,661 v5 M903.500,661 v5 M907,661 v5 M910.500,661 v5" stroke="#9a9a9a" stroke-width="0.700"/>
    <path d="M896,652 q3,-3 6,0 q-3,4 -6,0 M903,655 q3,-2 5,1" stroke="#555" stroke-width="0.800"/>
  </g>
  <rect x="930.600" y="642.600" width="1.600" height="22.400" fill="#151515"/>
  <rect x="932.200" y="643.400" width="4" height="19.400" fill="#f3f3f3"/>
  <path d="M922,649.500 q4,-1.500 5.500,2 q1,4 -1.500,7.500 q-3.500,0.500 -4.500,-2 q1.500,-2 0.500,-7.500 Z" fill="#23264f"/>
  <circle cx="924.600" cy="655.400" r="1.300" fill="#b5322c"/>
  <rect x="917.300" y="663.300" width="12" height="5.700" rx="2.600" fill="#232a7a"/>
  <path d="M920,664.600 v3.200 M922.200,664.600 v3.200 M924.400,664.600 l1.200,3.200 l1.200,-3.200" stroke="#fff" stroke-width="0.900" fill="none"/>
  <!-- sign out -->
  <rect x="950.700" y="636.300" width="81.300" height="34" rx="3" fill="#ee8b84"/>
  <!-- status pill -->
  <rect x="1041.400" y="634" width="153" height="38.600" rx="19.300" fill="#37383c"/>
  <circle cx="1060.600" cy="653.600" r="7" fill="#fff"/>
  <path d="M1060.600,649.400 L1064.400,653.600 H1062.200 V657.200 H1059 V653.600 H1056.800 Z" fill="#2b2c30"/>
  <circle cx="1085" cy="653.600" r="7" fill="#fff"/>
  <rect x="1103.300" y="642" width="1" height="22.600" fill="#5b5c60"/>
  <path d="M1122.400,660 L1114.600,650.800 A12,12 0 0 1 1130.200,650.800 Z" fill="#fff"/>
  <rect x="1139" y="649" width="7.200" height="11.400" rx="1" fill="none" stroke="#fff" stroke-width="1.500"/>
  <rect x="1140.800" y="647" width="3.600" height="2" fill="#fff"/>
  <rect x="1140.600" y="650.600" width="4" height="8.200" fill="#e5352c"/>
  <rect x="1142.100" y="651.400" width="1" height="4.400" fill="#fff"/><rect x="1142.100" y="656.600" width="1" height="1.200" fill="#fff"/>
</svg>
<div class="t" style="left:966.300px;top:648.300px;font-size:14px;color:#1f1f1f;letter-spacing:-0.297px">Sign out</div>
<div class="t" style="left:1082px;top:648.400px;font-size:10.500px;color:#2b2c30;font-weight:bold">4</div>
<div class="t" style="left:1156px;top:647px;font-size:13.500px;color:#fff;letter-spacing:-0.170px">9:39</div>

</div>
</body>
</html>
